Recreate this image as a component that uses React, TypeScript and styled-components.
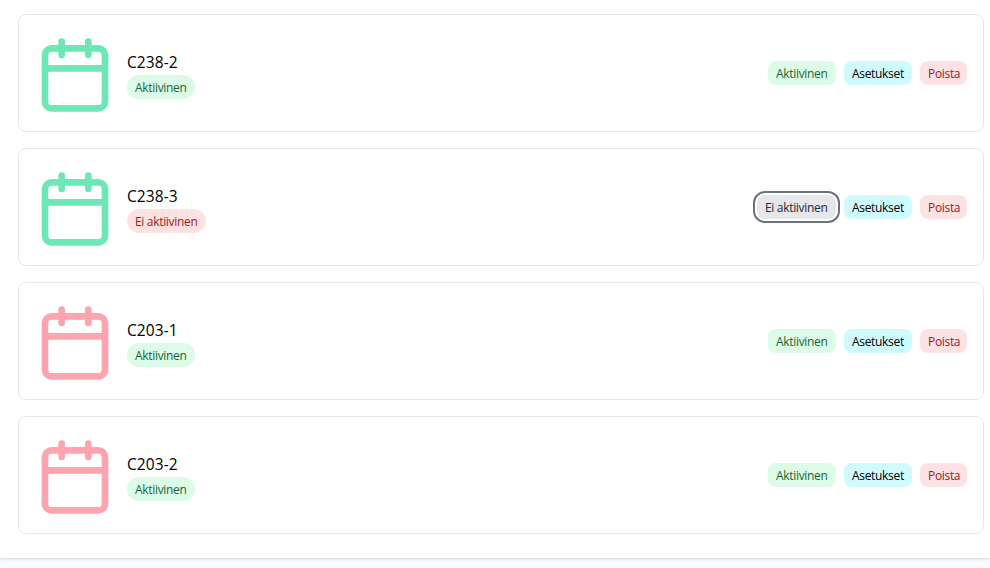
import React from "react";
import styled, { createGlobalStyle, css } from "styled-components";

const GlobalStyle = createGlobalStyle`
  *, *::before, *::after { box-sizing: border-box; }
  body {
    margin: 0;
    background: #f9fafb;
    color: #000;
    font-family: "Segoe UI", "Open Sans", "Noto Sans", sans-serif;
    overflow: hidden;
  }
`;

const Page = styled.div`
  height: 568px;
  overflow: hidden;
`;

const Panel = styled.main`
  height: 558px;
  padding: 14px 6px 24px 18px;
  background: #fff;
  box-shadow: 0 1px 3px rgba(0, 0, 0, 0.1), 0 1px 2px rgba(0, 0, 0, 0.06);
`;

const List = styled.ul`
  display: flex;
  flex-direction: column;
  gap: 16px;
  margin: 0;
  padding: 0;
  list-style: none;
`;

const Card = styled.li`
  display: flex;
  align-items: center;
  justify-content: space-between;
  height: 118px;
  padding: 16px;
  border: 1px solid #e5e7eb;
  border-radius: 8px;
`;

const Details = styled.div`
  display: flex;
  align-items: center;
  gap: 12px;
`;

const Icon = styled.svg<{ $color: string }>`
  display: block;
  width: 80px;
  height: 80px;
  margin-top: 4px;
  fill: none;
  stroke: ${(p) => p.$color};
  stroke-width: 2;
  stroke-linecap: round;
  stroke-linejoin: round;
`;

const Info = styled.div`
  display: flex;
  flex-direction: column;
  align-items: flex-start;
`;

const Name = styled.h2`
  margin: 3px 0 1px;
  font-size: 15.5px;
  font-weight: 400;
  line-height: 24px;
  letter-spacing: 0.1px;
`;

type Tone = "green" | "red" | "cyan" | "gray";

const tones: Record<Tone, { background: string; text: string }> = {
  green: { background: "#dcfce7", text: "#166534" },
  red: { background: "#fee2e2", text: "#991b1b" },
  cyan: { background: "#cffafe", text: "#000" },
  gray: { background: "#e5e7eb", text: "#1f2937" },
};

const pill = css<{ $tone: Tone; $width: number }>`
  display: flex;
  align-items: center;
  justify-content: flex-start;
  width: ${(p) => p.$width}px;
  height: 24px;
  padding: 2px 0 0 8px;
  border: 0;
  background: ${(p) => tones[p.$tone].background};
  color: ${(p) => tones[p.$tone].text};
  font-family: inherit;
  font-size: 12px;
  line-height: 16px;
  letter-spacing: -0.32px;
  white-space: nowrap;
`;

const Status = styled.span<{ $tone: Tone; $width: number }>`
  ${pill}
  border-radius: 12px;
`;

const Actions = styled.div`
  display: flex;
  gap: 8px;
`;

const Button = styled.button<{
  $tone: Tone;
  $width: number;
  $focused?: boolean;
}>`
  ${pill}
  border-radius: 8px;
  ${(p) =>
    p.$focused &&
    css`
      box-shadow: 0 0 0 2px #fff, 0 0 0 4px #6b7280;
    `}
`;

interface Room {
  name: string;
  color: string;
  active: boolean;
}

const GREEN = "#6ee7b7";
const PINK = "#fda4af";

const rooms: Room[] = [
  { name: "C238-2", color: GREEN, active: true },
  { name: "C238-3", color: GREEN, active: false },
  { name: "C203-1", color: PINK, active: true },
  { name: "C203-2", color: PINK, active: true },
];

function CalendarIcon({ color }: { color: string }) {
  return (
    <Icon viewBox="0 0 24 24" $color={color} aria-hidden="true">
      <path d="M8 2v4M16 2v4M3 10h18" />
      <rect x="3" y="4" width="18" height="18" rx="2" />
    </Icon>
  );
}

function RoomCard({ name, color, active }: Room) {
  const label = active ? "Aktiivinen" : "Ei aktiivinen";
  const width = active ? 68 : 79;
  return (
    <Card>
      <Details>
        <CalendarIcon color={color} />
        <Info>
          <Name>{name}</Name>
          <Status $tone={active ? "green" : "red"} $width={width}>
            {label}
          </Status>
        </Info>
      </Details>
      <Actions>
        <Button $tone={active ? "green" : "gray"} $width={width} $focused={!active}>
          {label}
        </Button>
        <Button $tone="cyan" $width={68}>
          Asetukset
        </Button>
        <Button $tone="red" $width={47}>
          Poista
        </Button>
      </Actions>
    </Card>
  );
}

export default function App() {
  return (
    <Page>
      <GlobalStyle />
      <Panel>
        <List>
          {rooms.map((room) => (
            <RoomCard key={room.name} {...room} />
          ))}
        </List>
      </Panel>
    </Page>
  );
}
